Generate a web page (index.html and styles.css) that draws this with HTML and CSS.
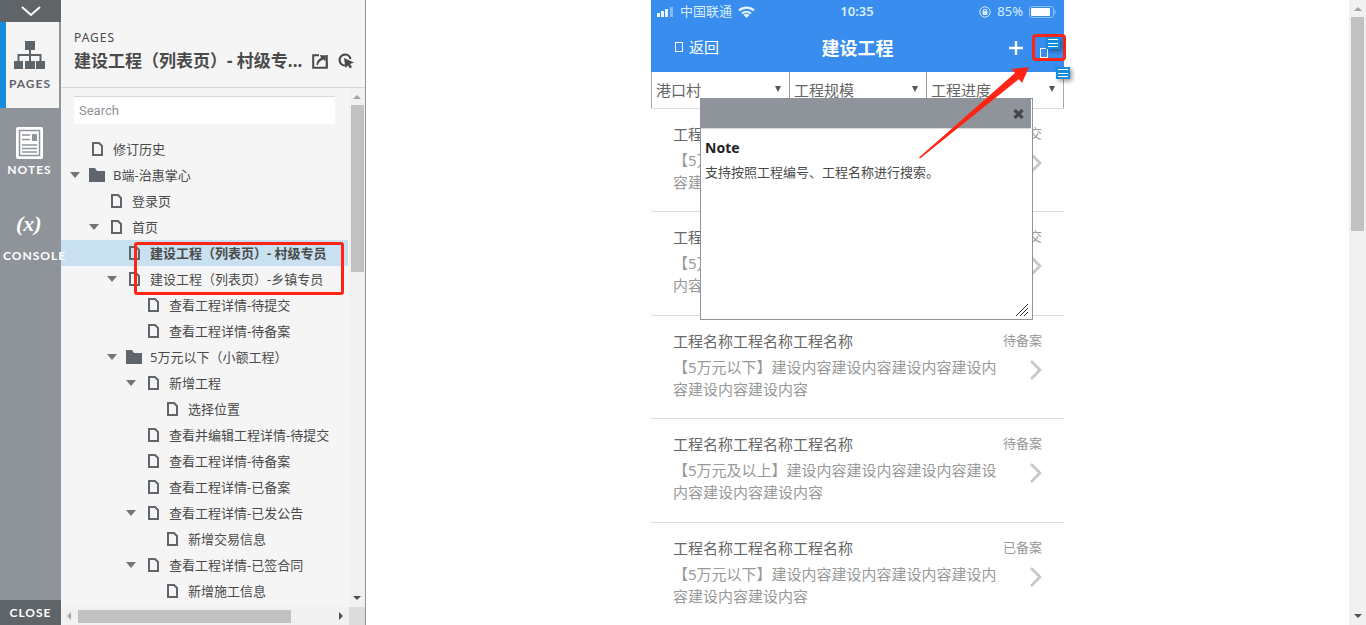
FILE: index.html
```html
<!DOCTYPE html>
<html lang="zh-CN">
<head>
<meta charset="utf-8">
<title>建设工程（列表页）- 村级专员</title>
<link rel="stylesheet" href="styles.css">
</head>
<body>
<svg class="defs" aria-hidden="true">
  <symbol id="file" viewBox="0 0 11 14"><path d="M1 1h6l3 3v9H1z" fill="none" stroke="#60656b" stroke-width="2"/></symbol>
  <symbol id="folder" viewBox="0 0 16 14"><path d="M0 0h6l2 3h8v11H0z" fill="#60656b"/></symbol>
  <symbol id="caret" viewBox="0 0 10 6"><path d="M0 0h10L5 6z" fill="#747474"/></symbol>
  <symbol id="next" viewBox="0 0 12 20"><path d="M1 1l9 9-9 9" fill="none" stroke="#c7c7c7" stroke-width="2.8"/></symbol>
  <symbol id="memo" viewBox="0 0 14 12"><path d="M0 0h14v12H0z" fill="#168cdd"/><path d="M2 2.5h10M2 6.5h10M2 9.5h10" stroke="#fff"/></symbol>
</svg>
<div class="app">
  <nav class="rail">
    <button class="rail-top" aria-label="收起"><svg width="20" height="11" viewBox="0 0 20 11"><path d="M1 1l9 8 9-8" fill="none" stroke="#fff" stroke-width="2"/></svg></button>
    <button class="rail-item active">
      <svg width="32" height="28" viewBox="0 0 32 28"><g fill="#5f6469"><path d="M11 0h10v9H11zM0 20h9v8H0zM11 20h10v8H11zM22 20h9v8h-9z"/></g><path d="M16 9v11M4.500 20v-6h22v6" fill="none" stroke="#5f6469" stroke-width="2"/></svg>
      <span>PAGES</span>
    </button>
    <button class="rail-item notes">
      <svg width="27" height="32" viewBox="0 0 27 32"><rect width="27" height="32" rx="2" fill="#fff"/><rect x="3.500" y="3.500" width="20" height="25" fill="none" stroke="#8f939a" stroke-width="1.500"/><path d="M6 8h8M6 12.500h8M6 18h15M6 21.500h15M6 25h15" stroke="#8f939a" stroke-width="1.700"/><path d="M16 7h5v7h-5z" fill="#8f939a"/></svg>
      <span>NOTES</span>
    </button>
    <button class="rail-item console">
      <span class="formula" aria-hidden="true">(x)</span>
      <span>CONSOLE</span>
    </button>
    <button class="rail-close">CLOSE</button>
  </nav>

  <aside class="panel">
    <header class="panel-head">
      <div class="eyebrow">PAGES</div>
      <div class="panel-title">
        <h1>建设工程（列表页）- 村级专...</h1>
        <button class="icon-btn" aria-label="新窗口打开"><svg width="16" height="15" viewBox="0 0 16 15"><path d="M7 1.200H1.200v12.600h13.600V9" fill="none" stroke="#4a4a4a" stroke-width="2"/><path d="M14.800 1v12" stroke="#4a4a4a" stroke-width="2"/><path d="M4.500 11c0-4 2-6 4.500-7L8 1l6 .5-.5 6-2-2C9 6.500 6.500 8 6 11z" fill="#4a4a4a"/></svg></button>
        <button class="icon-btn" aria-label="高亮交互元素"><svg width="16" height="16" viewBox="0 0 16 16"><path d="M7 12.500A5.500 5.500 0 1 1 12.500 6" fill="none" stroke="#4a4a4a" stroke-width="2.200"/><path d="M6 5l10 4.500-4 1.500 2 3-2 1.500-2-3L7.500 15z" fill="#4a4a4a"/></svg></button>
      </div>
    </header>
    <div class="panel-body">
      <div class="panel-view">
        <input class="search" type="text" placeholder="Search" aria-label="Search">
        <ul class="tree">
          <li><a href="#" class="l0"><i></i><b><svg class="file"><use href="#file"/></svg></b>修订历史</a></li>
          <li><a href="#" class="l0"><i><svg class="caret"><use href="#caret"/></svg></i><b><svg class="folder"><use href="#folder"/></svg></b>B端-治惠掌心</a></li>
          <li><a href="#" class="l1"><i></i><b><svg class="file"><use href="#file"/></svg></b>登录页</a></li>
          <li><a href="#" class="l1"><i><svg class="caret"><use href="#caret"/></svg></i><b><svg class="file"><use href="#file"/></svg></b>首页</a></li>
          <li><a href="#" class="l2 selected"><i></i><b><svg class="file"><use href="#file"/></svg></b>建设工程（列表页）- 村级专员</a><span class="frame"></span></li>
          <li><a href="#" class="l2"><i><svg class="caret"><use href="#caret"/></svg></i><b><svg class="file"><use href="#file"/></svg></b>建设工程（列表页）-乡镇专员</a></li>
          <li><a href="#" class="l3"><i></i><b><svg class="file"><use href="#file"/></svg></b>查看工程详情-待提交</a></li>
          <li><a href="#" class="l3"><i></i><b><svg class="file"><use href="#file"/></svg></b>查看工程详情-待备案</a></li>
          <li><a href="#" class="l2"><i><svg class="caret"><use href="#caret"/></svg></i><b><svg class="folder"><use href="#folder"/></svg></b>5万元以下（小额工程）</a></li>
          <li><a href="#" class="l3"><i><svg class="caret"><use href="#caret"/></svg></i><b><svg class="file"><use href="#file"/></svg></b>新增工程</a></li>
          <li><a href="#" class="l4"><i></i><b><svg class="file"><use href="#file"/></svg></b>选择位置</a></li>
          <li><a href="#" class="l3"><i></i><b><svg class="file"><use href="#file"/></svg></b>查看并编辑工程详情-待提交</a></li>
          <li><a href="#" class="l3"><i></i><b><svg class="file"><use href="#file"/></svg></b>查看工程详情-待备案</a></li>
          <li><a href="#" class="l3"><i></i><b><svg class="file"><use href="#file"/></svg></b>查看工程详情-已备案</a></li>
          <li><a href="#" class="l3"><i><svg class="caret"><use href="#caret"/></svg></i><b><svg class="file"><use href="#file"/></svg></b>查看工程详情-已发公告</a></li>
          <li><a href="#" class="l4"><i></i><b><svg class="file"><use href="#file"/></svg></b>新增交易信息</a></li>
          <li><a href="#" class="l3"><i><svg class="caret"><use href="#caret"/></svg></i><b><svg class="file"><use href="#file"/></svg></b>查看工程详情-已签合同</a></li>
          <li><a href="#" class="l4"><i></i><b><svg class="file"><use href="#file"/></svg></b>新增施工信息</a></li>
        </ul>
      </div>
      <div class="bar-v" aria-hidden="true"><span class="tip up"></span><span class="thumb tree-thumb"></span><span class="tip down"></span></div>
      <div class="bar-h" aria-hidden="true"><span class="tip left"></span><span class="thumb"></span><span class="tip right"></span></div>
      <div class="corner"></div>
    </div>
  </aside>

  <main class="stage">
    <div class="phone">
      <div class="status">
        <div class="status-side">
          <svg width="17" height="10" viewBox="0 0 17 10"><path d="M0 6h3v4H0zM4 4h3v6H4zM8 2h3v8H8z" fill="#e6f5ff"/><path d="M13 0h3v10h-3z" fill="#83bdf5"/></svg>
          <span>中国联通</span>
          <svg width="17" height="12" viewBox="0 0 17 12"><path d="M1 4.500a11 11 0 0 1 15 0M4 7.500a7 7 0 0 1 9 0" fill="none" stroke="#e6f5ff" stroke-width="2.200"/><path d="M5.500 9a4.500 4.500 0 0 1 6 0l-3 3z" fill="#e6f5ff"/></svg>
        </div>
        <span class="clock">10:35</span>
        <div class="status-side end">
          <svg width="12" height="12" viewBox="0 0 12 12" fill="none" stroke="#d2eafc"><circle cx="6" cy="6" r="5.200"/><rect x="4" y="5.500" width="4" height="3" fill="#d2eafc"/><path d="M4.500 5.500v-2h3v2"/></svg>
          <span>85%</span>
          <svg width="28" height="12" viewBox="0 0 28 12"><rect x=".5" y=".5" width="24" height="11" rx="2.500" fill="none" stroke="#8cc4f5"/><rect x="2" y="2" width="19" height="8" rx="1" fill="#fff"/><path d="M26 4v4" stroke="#8cc4f5"/></svg>
        </div>
      </div>
      <div class="topbar">
        <a href="#" class="back"><span class="glyph"></span>返回</a>
        <h2>建设工程</h2>
        <div class="actions">
          <button aria-label="新增"><svg width="14" height="14" viewBox="0 0 14 14"><path d="M7 0v14M0 7h14" stroke="#fff" stroke-width="2.400"/></svg></button>
          <button class="find" aria-label="搜索"><span class="glyph"></span><svg class="memo"><use href="#memo"/></svg></button>
        </div>
      </div>
      <div class="filters">
        <label><select aria-label="村"><option>港口村</option></select></label>
        <label><select aria-label="工程规模"><option>工程规模</option></select></label>
        <label><select aria-label="工程进度"><option>工程进度</option></select></label>
        <svg class="memo filter-memo"><use href="#memo"/></svg>
      </div>
      <ul class="list">
        <li><div class="row"><h3>工程名称工程名称工程名称</h3><span>待提交</span></div><div class="row"><p>【5万元以下】建设内容建设内容建设内容建设内容建设内容建设内容</p><svg class="next"><use href="#next"/></svg></div></li>
        <li><div class="row"><h3>工程名称工程名称工程名称</h3><span>待提交</span></div><div class="row"><p>【5万元及以上】建设内容建设内容建设内容建设内容建设内容建设内容</p><svg class="next"><use href="#next"/></svg></div></li>
        <li><div class="row"><h3>工程名称工程名称工程名称</h3><span>待备案</span></div><div class="row"><p>【5万元以下】建设内容建设内容建设内容建设内容建设内容建设内容</p><svg class="next"><use href="#next"/></svg></div></li>
        <li><div class="row"><h3>工程名称工程名称工程名称</h3><span>待备案</span></div><div class="row"><p>【5万元及以上】建设内容建设内容建设内容建设内容建设内容建设内容</p><svg class="next"><use href="#next"/></svg></div></li>
        <li><div class="row"><h3>工程名称工程名称工程名称</h3><span>已备案</span></div><div class="row"><p>【5万元以下】建设内容建设内容建设内容建设内容建设内容建设内容</p><svg class="next"><use href="#next"/></svg></div></li>
      </ul>
      <section class="note" role="dialog" aria-labelledby="note-title">
        <div class="note-head"><button aria-label="关闭"><svg width="11" height="10" viewBox="0 0 11 10"><path d="M1.500 1l8 8M9.500 1l-8 8" stroke="#45474a" stroke-width="3.200"/></svg></button></div>
        <div class="note-body">
          <h4 id="note-title">Note</h4>
          <p>支持按照工程编号、工程名称进行搜索。</p>
        </div>
        <svg class="grip" width="13" height="13" viewBox="0 0 13 13"><path d="M0 13L12 1M4 13l8-8M8 13l4-4" stroke="#333"/></svg>
      </section>
      <svg class="pointer" viewBox="0 0 112 94"><path d="M110 1L92 3l4 4L0 91.500l1 1L100 13l3 4z" fill="#ff2415"/></svg>
    </div>
  </main>
  <div class="bar-v page-bar" aria-hidden="true"><span class="tip up"></span><span class="thumb"></span><span class="tip down"></span></div>
</div>
</body>
</html>
```

FILE: styles.css
```css
* { box-sizing: border-box; }
body, h1, h2, h3, h4, p, ul { margin: 0; padding: 0; }
ul { list-style: none; }
body { font-family: "Noto Sans", "Noto Sans CJK SC", sans-serif; font-size: 13px; color: #4a4a4a; background: #fff; }
button { border: 0; padding: 0; background: none; font: inherit; letter-spacing: inherit; color: inherit; cursor: pointer; }
a { color: inherit; text-decoration: none; }
svg { display: block; flex: none; }
.defs { position: absolute; width: 0; height: 0; }
.app { display: flex; height: 100vh; overflow: hidden; }

/* left rail */
.rail { width: 61px; flex: none; display: flex; flex-direction: column; background: #8f939a; color: #fff; font-family: Lato, sans-serif; font-size: 12px; font-weight: 700; line-height: 16px; letter-spacing: 1px; z-index: 2; }
.rail-top { height: 22px; display: flex; align-items: center; justify-content: center; background: #5f6469; }
.rail-item { height: 86px; display: flex; flex-direction: column; align-items: center; padding-top: 19px; gap: 7px; white-space: nowrap; }
.rail-item.active { margin-right: 2px; padding-right: 5px; background: #f5f5f5; border-left: 6px solid #168cdd; color: #5f6469; }
.rail-item.notes { padding-right: 2px; gap: 3px; }
.rail-item.console { align-items: flex-start; padding-left: 3px; padding-top: 14px; gap: 8px; }
.formula { font: italic 700 22px/32px "Liberation Serif", serif; letter-spacing: 0; padding-left: 13px; }
.rail-close { margin-top: auto; height: 25px; background: #5f6469; }

/* page tree panel */
.panel { width: 305px; flex: none; display: flex; flex-direction: column; min-height: 0; background: #f5f5f5; border-right: 1px solid #8f939a; z-index: 1; }
.panel-head { height: 88px; padding: 28px 11px 0 13px; border-bottom: 1px solid #d8d8d8; }
.eyebrow { font-size: 12px; line-height: 20px; letter-spacing: 1px; }
.panel-title { display: flex; align-items: center; justify-content: flex-end; gap: 10px; }
.panel-title h1 { flex: 1; min-width: 0; margin-right: -8px; font-size: 17px; line-height: 26px; font-weight: 700; white-space: nowrap; }
.panel-body { flex: 1; min-height: 0; display: grid; grid-template-columns: 1fr 16px; grid-template-rows: 1fr 18px; }
.panel-view { min-height: 0; min-width: 0; overflow: hidden; }
.search { display: block; width: 261px; height: 28px; margin: 8px 0 12px 13px; padding: 0 5px; border: 0; border-top: 1px solid #d8d8d8; background: #fff; font: 13px Roboto, sans-serif; color: #4a4a4a; }
.search::placeholder { color: #8f939a; opacity: 1; }
.tree li { position: relative; }
.tree a { display: flex; align-items: center; height: 26px; line-height: 26px; white-space: nowrap; margin-right: 1px; }
.tree i { width: 10px; margin-right: 9px; }
.tree b { width: 16px; margin-right: 8px; display: flex; justify-content: center; }
.tree .l0 { padding-left: 9px; }
.tree .l1 { padding-left: 28px; }
.tree .l2 { padding-left: 46px; }
.tree .l3 { padding-left: 65px; }
.tree .l4 { padding-left: 84px; }
.tree .selected { background: #c8e0ef; font-weight: 700; }
.file { width: 11px; height: 14px; }
.folder { width: 16px; height: 14px; }
.caret { width: 10px; height: 6px; }
.frame { position: absolute; left: 73px; top: 2px; width: 210px; height: 53px; border: 3px solid #ff2415; border-radius: 3px; z-index: 2; }

/* scroll bars */
.bar-v, .bar-h { display: flex; align-items: center; background: #f1f1f1; }
.bar-v { flex-direction: column; padding: 7px 0; }
.bar-h { padding: 0 6px; }
.thumb { background: #c1c1c1; }
.bar-v .thumb { width: 13px; height: 35%; margin-top: 6px; }
.bar-v .tree-thumb { height: 33%; }
.bar-h .thumb { height: 13px; width: 77%; margin-left: 7px; }
.tip { border: 4px solid transparent; }
.up { border-top: 0; border-bottom-color: #a3a3a3; }
.down { border-bottom: 0; border-top-color: #505050; margin-top: auto; }
.left { border-left: 0; border-right-color: #a3a3a3; }
.right { border-right: 0; border-left-color: #505050; margin-left: auto; }
.corner { background: #dcdcdc; }
.page-bar { width: 17px; flex: none; }

/* prototype stage */
.stage { flex: 1; min-width: 0; display: flex; justify-content: center; overflow: hidden; }
.phone { position: relative; width: 413px; font-size: 15px; color: #666; }
.status { height: 23px; padding: 0 7px 0 6px; display: grid; grid-template-columns: 1fr auto 1fr; align-items: center; background: #388dee; color: #d8edfd; font-size: 13px; line-height: 23px; }
.status-side { display: flex; align-items: center; gap: 6px; }
.status-side.end { justify-content: flex-end; }
.clock { font-weight: 600; }
.topbar { height: 49px; padding: 0 13px 2px; display: grid; grid-template-columns: minmax(0, 1fr) auto minmax(0, 1fr); align-items: center; background: #388dee; color: #fff; }
.topbar h2 { font-size: 18px; font-weight: 700; }
.back { display: flex; align-items: center; gap: 6px; padding-left: 11px; }
.glyph { width: 8px; height: 10px; border: 1px solid #fff; }
.actions { display: flex; align-items: center; justify-content: flex-end; gap: 9px; margin-right: -15px; padding-top: 2px; }
.find { position: relative; width: 34px; height: 27px; padding: 10px 0 0 5px; border: 3px solid #ff2415; border-radius: 4px; }
.find .glyph { display: block; }
.memo { width: 14px; height: 12px; filter: drop-shadow(2px 2px 2px #0006); }
.find .memo { position: absolute; left: 11px; top: 0; }
.filters { position: relative; display: grid; grid-template-columns: repeat(3, 1fr); height: 37px; border: 1px solid #a9a9a9; border-top: 0; border-bottom-color: #ddd; }
.filters label { position: relative; display: flex; }
.filters label + label { border-left: 1px solid #999; }
.filters label::after { content: ""; position: absolute; right: 8px; top: 14px; border: 3px solid transparent; border-top: 6px solid #555; border-bottom: 0; pointer-events: none; }
.filters select { appearance: none; flex: 1; border: 0; background: #fff; padding: 0 20px 0 4px; font: inherit; color: inherit; }
.filter-memo { position: absolute; right: -7px; top: -5px; z-index: 1; }
.list li { padding: 12px 22px 18px; border-bottom: 1px solid #ddd; }
.list li:nth-child(even) { padding-bottom: 19px; }
.row { display: flex; justify-content: space-between; align-items: center; }
.row + .row { margin-top: 2px; }
.row h3 { font-size: 15px; font-weight: 400; line-height: 26px; }
.row span { font-size: 13px; line-height: 20px; padding-bottom: 2px; color: #999; }
.row p { width: 333px; line-height: 22px; color: #999; }
.next { width: 12px; height: 20px; margin-bottom: 16px; }

/* note window */
.note { position: absolute; left: 49px; top: 98px; width: 333px; height: 222px; background: #fff; border: 1px solid #8f939a; color: #4a4a4a; }
.note-head { height: 30px; margin-right: 1px; padding-right: 7px; display: flex; align-items: center; justify-content: flex-end; background: #8f939a; border-bottom: 1px solid #d8d8d8; }
.note-body { padding: 8px 4px; }
.note-body h4 { font-size: 14px; line-height: 22px; color: #222; }
.note-body p { margin-top: 2px; font-size: 13px; line-height: 22px; }
.grip { position: absolute; right: 3px; bottom: 3px; }
.pointer { position: absolute; left: 268px; top: 66px; width: 112px; height: 94px; pointer-events: none; }
```
